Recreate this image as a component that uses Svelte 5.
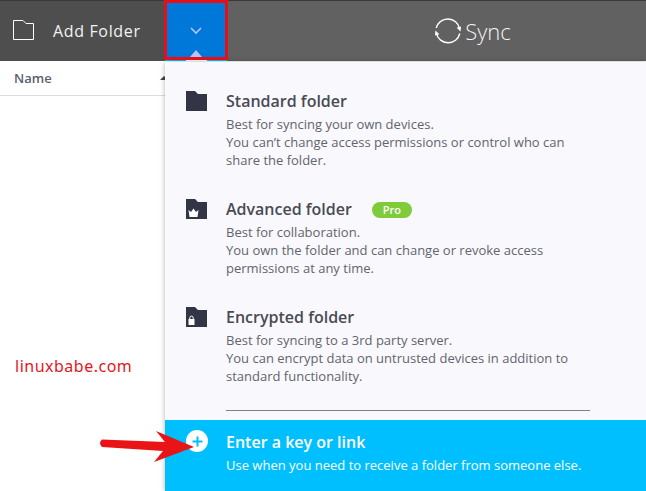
<script>
  const options = [
    {
      title: 'Standard folder',
      lines: ['Best for syncing your own devices.', 'You can’t change access permissions or control who can', 'share the folder.'],
      badge: null
    },
    {
      title: 'Advanced folder',
      lines: ['Best for collaboration.', 'You own the folder and can change or revoke access', 'permissions at any time.'],
      badge: 'crown',
      pro: true
    },
    {
      title: 'Encrypted folder',
      lines: ['Best for syncing to a 3rd party server.', 'You can encrypt data on untrusted devices in addition to', 'standard functionality.'],
      badge: 'lock'
    }
  ];
</script>

<div class="app">
  <header class="topbar">
    <div class="add">
      <svg class="add-icon" width="22" height="20" viewBox="0 0 22 20">
        <path d="M0.5 0.5 H10 L13 3.5 H20.5 V19.5 H0.5 Z" fill="none" stroke="#fff" stroke-width="1" />
      </svg>
      <span>Add Folder</span>
    </div>
    <div class="drop">
      <svg width="12" height="8" viewBox="0 0 12 8">
        <path d="M1 1 L6 6 L11 1" fill="none" stroke="#b4c4f4" stroke-width="1.6" />
      </svg>
      <i class="caret"></i>
    </div>
    <div class="brand">
      <svg width="28" height="28" viewBox="0 0 28 28">
        <path d="M2.2 11 A12 12 0 0 1 25.6 11.6" fill="none" stroke="#fff" stroke-width="1.4" />
        <path d="M25.8 16.5 A12 12 0 0 1 2.4 16.4" fill="none" stroke="#fff" stroke-width="1.4" />
        <path d="M22.6 10.8 L26.6 14.6 L27 9.4 Z" fill="#fff" />
        <path d="M5.4 17.2 L1.4 13.4 L1 18.6 Z" fill="#fff" />
      </svg>
      <span>Sync</span>
    </div>
  </header>

  <div class="content">
    <div class="list">
      <div class="list-head">
        <span>Name</span>
        <i class="sort"></i>
      </div>
    </div>

    <div class="panel">
      <div class="options">
        {#each options as opt}
          <div class="option">
            <svg class="folder" width="21" height="20" viewBox="0 0 21 20">
              <path d="M0 0 H9 L12 3 H21 V20 H0 Z" fill="#323546" />
              {#if opt.badge === 'crown'}
                <path d="M2.5 11 L5 13 L7.5 9.5 L10 13 L12.5 11 L11.5 18 H3.5 Z" fill="#fff" />
              {/if}
              {#if opt.badge === 'lock'}
                <rect x="2.5" y="12" width="6" height="6" fill="#fff" />
                <path d="M3.8 12 V10.8 A1.7 1.7 0 0 1 7.2 10.8 V12" fill="none" stroke="#fff" stroke-width="1" />
              {/if}
            </svg>
            <div class="text">
              <h3>{opt.title}{#if opt.pro}<span class="pro">Pro</span>{/if}</h3>
              {#each opt.lines as line}
                <p>{line}</p>
              {/each}
            </div>
          </div>
        {/each}
      </div>
      <div class="rule"></div>
      <div class="key">
        <span class="plus">
          <svg width="11" height="11" viewBox="0 0 11 11">
            <path d="M5.5 0.5 V10.5 M0.5 5.5 H10.5" stroke="#00bfff" stroke-width="2" />
          </svg>
        </span>
        <div class="text">
          <h3>Enter a key or link</h3>
          <p>Use when you need to receive a folder from someone else.</p>
        </div>
      </div>
    </div>
  </div>

  <!-- annotations drawn over the screenshot -->
  <div class="mark"></div>
  <div class="site">linuxbabe.com</div>
  <svg class="arrow" width="100" height="36" viewBox="0 0 100 36">
    <path d="M4 10.5 L67 13 L58 2 L96 18 L56 33 L65 22 L4 18 Q0 14 4 10.5 Z" fill="#e81416" />
  </svg>
</div>

<style>
  :global(body) {
    margin: 0;
    background: #fff;
  }
  .app {
    position: relative;
    width: 646px;
    height: 491px;
    overflow: hidden;
    font-family: 'Open Sans', 'Noto Sans', sans-serif;
  }
  .topbar {
    display: flex;
    height: 60px;
    border-top: 1px solid #3a3a3a;
    background: #616161;
    color: #fff;
  }
  .add {
    display: flex;
    align-items: center;
    width: 165px;
    box-sizing: border-box;
    padding-left: 13px;
    background: #4e4e4e;
    font-size: 16px;
    letter-spacing: 0.65px;
    color: #f2f2f2;
  }
  .add-icon {
    margin-right: 18px;
    margin-bottom: 2px;
  }
  .drop {
    position: relative;
    display: flex;
    align-items: center;
    justify-content: center;
    width: 62px;
    box-sizing: border-box;
    border-bottom: 1px solid #00bfff;
    background: #0078d9;
  }
  .drop::after {
    content: '';
    position: absolute;
    left: 21px;
    bottom: -1px;
    width: 21px;
    height: 1px;
    background: #fff;
  }
  .caret {
    position: absolute;
    left: 25px;
    bottom: 3px;
    width: 0;
    height: 0;
    border-left: 6px solid transparent;
    border-right: 6px solid transparent;
    border-bottom: 7px solid #b4c4f4;
  }
  .brand {
    flex: 1;
    display: flex;
    align-items: center;
    justify-content: center;
    gap: 3px;
    padding-left: 68px;
    font-size: 22px;
    font-weight: 300;
    color: #f4f4f4;
    margin-left: 4px;
  }
  .content {
    position: relative;
    height: 430px;
  }
  .list {
    width: 165px;
  }
  .list-head {
    display: flex;
    align-items: center;
    justify-content: space-between;
    height: 34px;
    padding: 0 0 0 14px;
    border-bottom: 1px solid #dcdcdc;
    font-size: 13px;
    font-weight: 600;
    color: #5a5f6e;
    box-sizing: content-box;
    width: 151px;
  }
  .sort {
    width: 0;
    height: 0;
    margin-right: -3px;
    border-left: 4px solid transparent;
    border-right: 4px solid transparent;
    border-bottom: 4px solid #444;
  }
  .panel {
    position: absolute;
    left: 165px;
    top: 1px;
    right: 0;
    bottom: 0;
    display: flex;
    flex-direction: column;
    background: #f9f9fd;
    box-shadow: 0 0 5px rgba(0, 0, 0, 0.3);
  }
  .options {
    flex: 1;
    display: flex;
    flex-direction: column;
    gap: 29px;
    padding-top: 28px;
  }
  .option {
    display: flex;
    padding-left: 21px;
  }
  .folder {
    margin-top: 1px;
    flex: none;
  }
  .text {
    margin-left: 19px;
  }
  h3 {
    margin: 0 0 3px;
    height: 22px;
    font-size: 16px;
    line-height: 22px;
    font-weight: 600;
    color: #4a4a55;
  }
  p {
    margin: 0;
    font-size: 13px;
    line-height: 18px;
    color: #62646e;
  }
  .pro {
    display: inline-block;
    margin-left: 20px;
    width: 40px;
    height: 16px;
    border-radius: 8px;
    background: #7fcb3a;
    color: #fff;
    font-size: 11px;
    line-height: 16px;
    text-align: center;
    vertical-align: 1px;
  }
  .rule {
    height: 1px;
    margin: 0 56px 9px 61px;
    background: #808080;
  }
  .key {
    position: relative;
    display: flex;
    height: 71px;
    box-sizing: border-box;
    padding: 11px 0 0 41px;
    background: #00bfff;
  }
  .key .text {
    margin-left: 20px;
  }
  .key h3,
  .key p {
    color: #fff;
  }
  .plus {
    position: absolute;
    left: 21px;
    top: 10px;
    width: 22px;
    height: 22px;
    display: flex;
    align-items: center;
    justify-content: center;
    border-radius: 50%;
    background: #fff;
  }
  .mark {
    position: absolute;
    left: 164px;
    top: 0;
    width: 58px;
    height: 54px;
    border: 3px solid #e60f17;
  }
  .site {
    position: absolute;
    left: 15px;
    top: 355px;
    font-family: 'Noto Sans', sans-serif;
    font-size: 16px;
    letter-spacing: 0.5px;
    color: #e8141c;
  }
  .arrow {
    position: absolute;
    left: 98px;
    top: 429px;
  }
</style>
